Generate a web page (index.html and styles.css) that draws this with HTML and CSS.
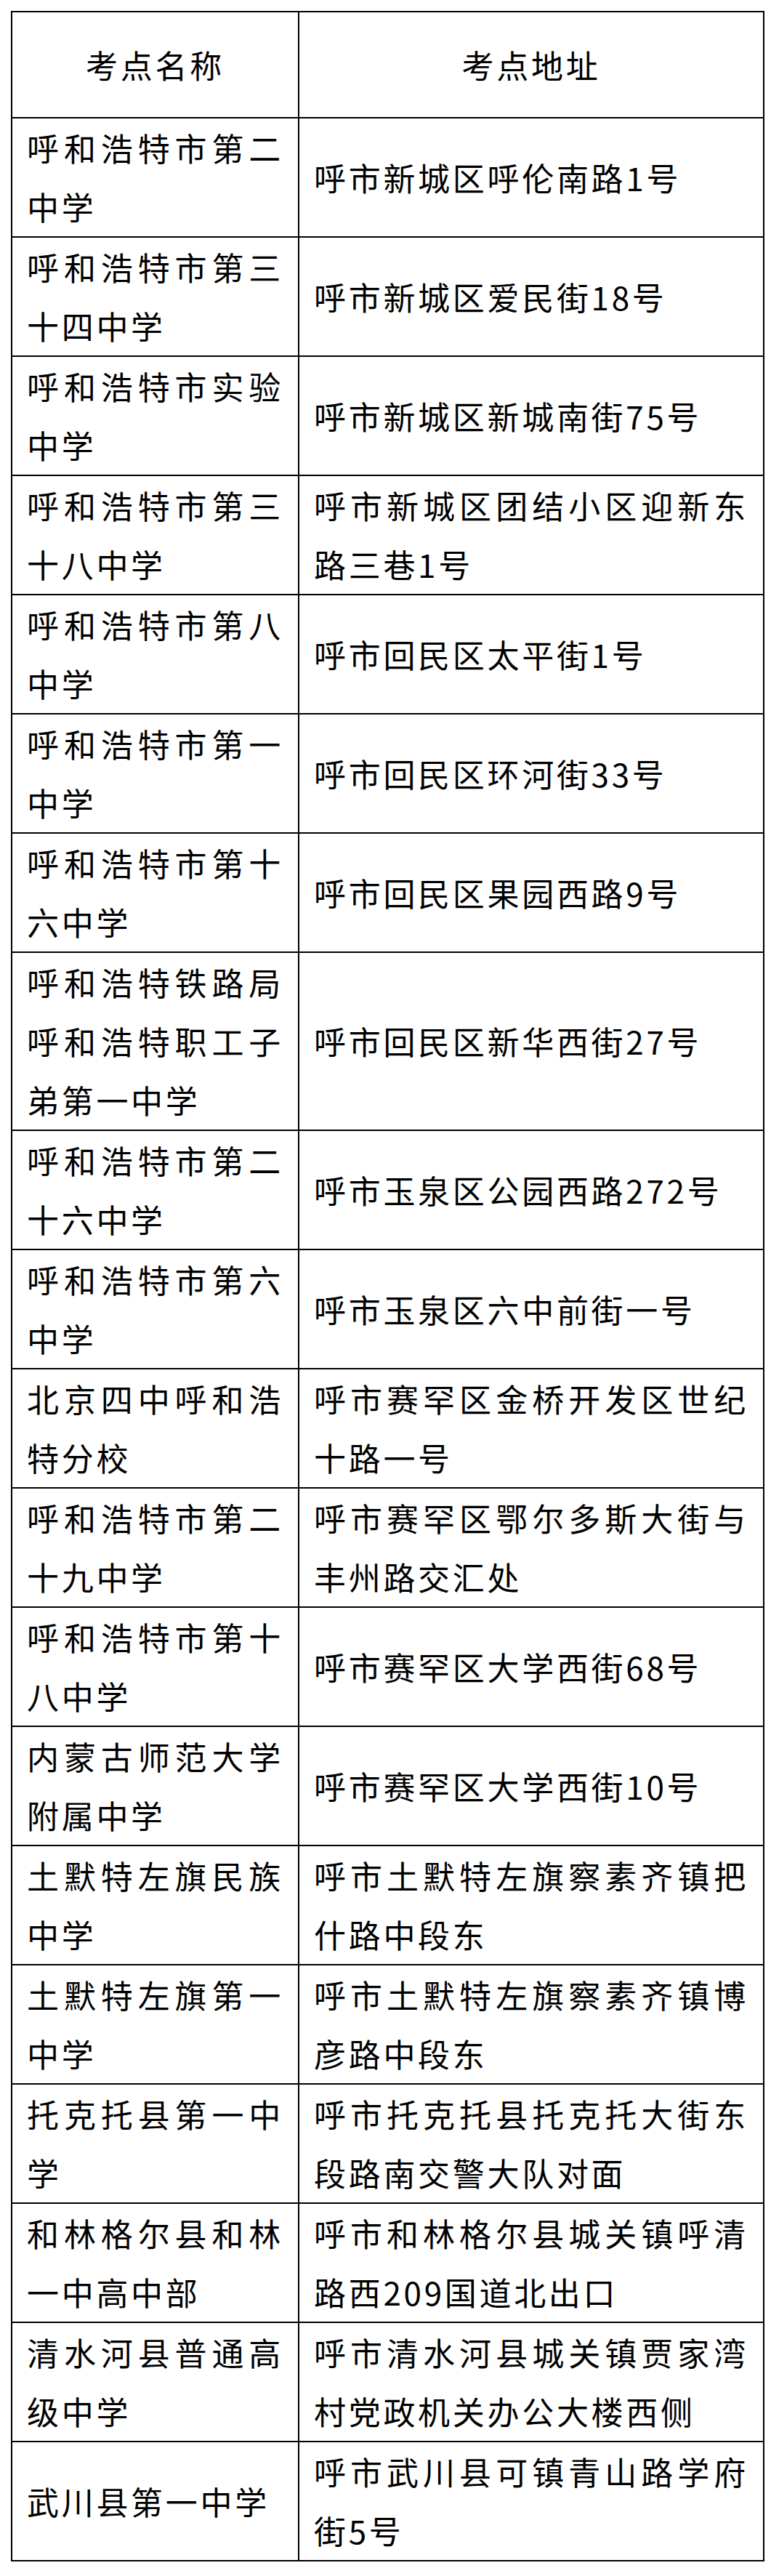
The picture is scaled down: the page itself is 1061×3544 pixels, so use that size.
FILE: index.html
```html
<!DOCTYPE html>
<html lang="zh-CN">
<head>
<meta charset="utf-8">
<title>考点名称与地址</title>
<link rel="stylesheet" href="styles.css">
</head>
<body>
<table class="exam-table">
  <colgroup>
    <col class="col-name">
    <col class="col-addr">
  </colgroup>
  <thead>
    <tr><th>考点名称</th><th>考点地址</th></tr>
  </thead>
  <tbody>
    <tr><td>呼和浩特市第二中学</td><td>呼市新城区呼伦南路1号</td></tr>
    <tr><td>呼和浩特市第三十四中学</td><td>呼市新城区爱民街18号</td></tr>
    <tr><td>呼和浩特市实验中学</td><td>呼市新城区新城南街75号</td></tr>
    <tr><td>呼和浩特市第三十八中学</td><td>呼市新城区团结小区迎新东路三巷1号</td></tr>
    <tr><td>呼和浩特市第八中学</td><td>呼市回民区太平街1号</td></tr>
    <tr><td>呼和浩特市第一中学</td><td>呼市回民区环河街33号</td></tr>
    <tr><td>呼和浩特市第十六中学</td><td>呼市回民区果园西路9号</td></tr>
    <tr><td>呼和浩特铁路局呼和浩特职工子弟第一中学</td><td>呼市回民区新华西街27号</td></tr>
    <tr><td>呼和浩特市第二十六中学</td><td>呼市玉泉区公园西路272号</td></tr>
    <tr><td>呼和浩特市第六中学</td><td>呼市玉泉区六中前街一号</td></tr>
    <tr><td>北京四中呼和浩特分校</td><td>呼市赛罕区金桥开发区世纪十路一号</td></tr>
    <tr><td>呼和浩特市第二十九中学</td><td>呼市赛罕区鄂尔多斯大街与丰州路交汇处</td></tr>
    <tr><td>呼和浩特市第十八中学</td><td>呼市赛罕区大学西街68号</td></tr>
    <tr><td>内蒙古师范大学附属中学</td><td>呼市赛罕区大学西街10号</td></tr>
    <tr><td>土默特左旗民族中学</td><td>呼市土默特左旗察素齐镇把什路中段东</td></tr>
    <tr><td>土默特左旗第一中学</td><td>呼市土默特左旗察素齐镇博彦路中段东</td></tr>
    <tr><td>托克托县第一中学</td><td>呼市托克托县托克托大街东段路南交警大队对面</td></tr>
    <tr><td>和林格尔县和林一中高中部</td><td>呼市和林格尔县城关镇呼清路西209国道北出口</td></tr>
    <tr><td>清水河县普通高级中学</td><td>呼市清水河县城关镇贾家湾村党政机关办公大楼西侧</td></tr>
    <tr><td>武川县第一中学</td><td>呼市武川县可镇青山路学府街5号</td></tr>
  </tbody>
</table>
</body>
</html>
```
FILE: styles.css
```css
html, body {
  background: #ffffff;
}
body {
  margin: 15px 0 0 15px;
  font-family: "Noto Sans CJK SC", "Noto Sans", sans-serif;
  color: #000000;
}
.exam-table {
  border-collapse: collapse;
  table-layout: fixed;
  width: 1035px;
}
.col-name {
  width: 395px;
}
.col-addr {
  width: 640px;
}
.exam-table th,
.exam-table td {
  border: 2px solid #000000;
  padding: 0 20px;
  font-size: 44px;
  font-weight: 400;
  line-height: 81px;
  letter-spacing: 3.7px;
  vertical-align: middle;
  text-align: justify;
}
.exam-table th {
  height: 144px;
  text-align: center;
}
```
